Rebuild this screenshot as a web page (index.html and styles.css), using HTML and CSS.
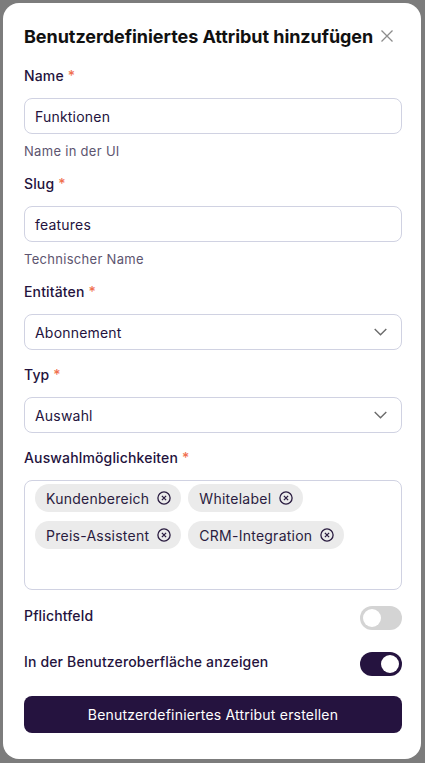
FILE: index.html
```html
<!DOCTYPE html>
<html lang="de">
<head>
<meta charset="utf-8">
<link rel="stylesheet" href="styles.css">
</head>
<body>
<div class="modal">
  <div class="header">
    <h2 class="title">Benutzerdefiniertes Attribut hinzufügen</h2>
    <svg class="close" width="12" height="12" viewBox="0 0 12 12"><path d="M0.5 0.5L11.5 11.5M11.5 0.5L0.5 11.5" stroke="#8c8c8c" stroke-width="1.3" fill="none"/></svg>
  </div>

  <div class="field first">
    <label class="label">Name <span class="req">*</span></label>
    <div class="input">Funktionen</div>
    <div class="help">Name in der UI</div>
  </div>

  <div class="field">
    <label class="label">Slug <span class="req">*</span></label>
    <div class="input">features</div>
    <div class="help">Technischer Name</div>
  </div>

  <div class="field">
    <label class="label">Entitäten <span class="req">*</span></label>
    <div class="input select">Abonnement
      <svg class="chev" width="13" height="8" viewBox="0 0 13 8"><path d="M0.7 0.9L6.5 6.7L12.3 0.9" stroke="#6b6b6b" stroke-width="1.4" fill="none"/></svg>
    </div>
  </div>

  <div class="field after-select">
    <label class="label">Typ <span class="req">*</span></label>
    <div class="input select">Auswahl
      <svg class="chev" width="13" height="8" viewBox="0 0 13 8"><path d="M0.7 0.9L6.5 6.7L12.3 0.9" stroke="#6b6b6b" stroke-width="1.4" fill="none"/></svg>
    </div>
  </div>

  <div class="field after-select">
    <label class="label">Auswahlmöglichkeiten <span class="req">*</span></label>
    <div class="tagbox">
      <span class="chip">Kundenbereich <svg class="x" viewBox="0 0 14 14"><circle cx="7" cy="7" r="6.1" stroke="#2a1c40" stroke-width="1.3" fill="none"/><path d="M4.9 4.9L9.1 9.1M9.1 4.9L4.9 9.1" stroke="#2a1c40" stroke-width="1.3"/></svg></span>
      <span class="chip">Whitelabel <svg class="x" viewBox="0 0 14 14"><circle cx="7" cy="7" r="6.1" stroke="#2a1c40" stroke-width="1.3" fill="none"/><path d="M4.9 4.9L9.1 9.1M9.1 4.9L4.9 9.1" stroke="#2a1c40" stroke-width="1.3"/></svg></span>
      <span class="chip">Preis-Assistent <svg class="x" viewBox="0 0 14 14"><circle cx="7" cy="7" r="6.1" stroke="#2a1c40" stroke-width="1.3" fill="none"/><path d="M4.9 4.9L9.1 9.1M9.1 4.9L4.9 9.1" stroke="#2a1c40" stroke-width="1.3"/></svg></span>
      <span class="chip">CRM-Integration <svg class="x" viewBox="0 0 14 14"><circle cx="7" cy="7" r="6.1" stroke="#2a1c40" stroke-width="1.3" fill="none"/><path d="M4.9 4.9L9.1 9.1M9.1 4.9L4.9 9.1" stroke="#2a1c40" stroke-width="1.3"/></svg></span>
    </div>
  </div>

  <div class="switch-row first">
    <span class="label">Pflichtfeld</span>
    <span class="toggle"><span class="knob"></span></span>
  </div>
  <div class="switch-row second">
    <span class="label">In der Benutzeroberfläche anzeigen</span>
    <span class="toggle on"><span class="knob"></span></span>
  </div>

  <button class="submit">Benutzerdefiniertes Attribut erstellen</button>
</div>
</body>
</html>
```

FILE: styles.css
```css
* { box-sizing: border-box; }
html, body { margin: 0; padding: 0; }
body {
  background: #7c7c7c;
  font-family: Inter, "Noto Sans", sans-serif;
  color: #24133d;
  width: 425px;
  height: 763px;
  overflow: hidden;
}
.modal {
  margin: 3px 4px 0 3px;
  width: 418px;
  height: 756px;
  background: #fff;
  border-radius: 16px;
  padding: 19px 19px 0 21px;
  display: flex;
  flex-direction: column;
}
.header {
  display: flex;
  align-items: center;
  justify-content: space-between;
  height: 28px;
}
.title {
  margin: 0;
  font-size: 18px;
  font-weight: 700;
  color: #111;
  letter-spacing: -0.05px;
}
.close { margin-right: 9px; }
.field { display: flex; flex-direction: column; margin-top: 13px; }
.field.first { margin-top: 15px; }
.field.after-select { margin-top: 14px; }
.label {
  font-size: 14px;
  font-weight: 500;
  color: #24133d;
  line-height: 22px;
  letter-spacing: 0.15px;
}
.req { color: #f0704f; }
.input {
  margin-top: 11px;
  height: 36px;
  border: 1px solid #d0d2e2;
  border-radius: 8px;
  padding: 0 10px;
  display: flex;
  align-items: center;
  font-size: 14px;
  letter-spacing: 0.2px;
  color: #24133d;
}
.select { justify-content: space-between; padding-right: 14px; }
.help {
  margin-top: 8px;
  font-size: 13px;
  letter-spacing: 0.3px;
  color: #5d5570;
  line-height: 18px;
}
.tagbox {
  margin-top: 11px;
  height: 110px;
  border: 1px solid #d0d2e2;
  border-radius: 8px;
  padding: 3px 10px;
  display: flex;
  flex-wrap: wrap;
  align-content: flex-start;
  gap: 9px 7px;
}
.chip {
  display: inline-flex;
  align-items: center;
  gap: 8px;
  height: 28px;
  padding: 0 10px 0 11px;
  background: #ebebeb;
  border-radius: 14px;
  font-size: 14px;
  letter-spacing: 0.25px;
  color: #2a1c40;
}
.x { width: 14px; height: 14px; }
.switch-row {
  display: flex;
  justify-content: space-between;
  align-items: center;
  height: 24px;
}
.switch-row .label { line-height: 18px; margin-bottom: 5px; }
.switch-row.first { margin-top: 16px; }
.switch-row.second { margin-top: 22px; }
.toggle {
  width: 42px;
  height: 24px;
  border-radius: 12px;
  background: #d4d4d4;
  padding: 3px;
  display: flex;
}
.knob {
  width: 18px;
  height: 18px;
  border-radius: 50%;
  background: #fff;
}
.toggle.on { background: #25133f; justify-content: flex-end; }
.submit {
  margin-top: 20px;
  height: 37px;
  border: none;
  border-radius: 8px;
  background: #25133f;
  color: #fff;
  font-family: inherit;
  font-size: 14px;
  font-weight: 400;
  letter-spacing: 0.2px;
  padding: 0;
}
```
